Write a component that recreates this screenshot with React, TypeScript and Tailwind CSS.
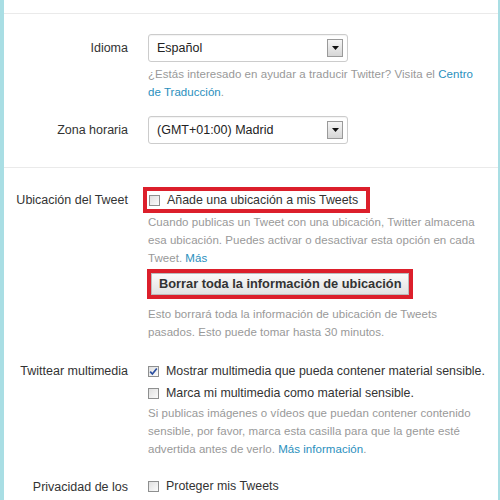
import { ReactNode } from "react";

const font = "font-['Liberation_Sans',Arial,sans-serif]";

const Row = ({ label, children, className }: { label: ReactNode; children: ReactNode; className?: string }) => (
  <div className={`grid grid-cols-[124px_1fr] gap-x-[20px] ${className ?? ""}`}>
    <div className="text-right text-[12.5px] leading-[18px] text-[#333]">{label}</div>
    <div>{children}</div>
  </div>
);

const FakeSelect = ({ value }: { value: string }) => (
  <div className="flex h-[28px] w-[200px] items-center justify-between rounded-[3px] border border-[#ccc] bg-white pl-[8px] pr-[4px] shadow-[inset_0_1px_1px_rgba(0,0,0,0.05)]">
    <span className="text-[12.5px] text-[#222]">{value}</span>
    <span className="flex h-[18px] w-[16px] items-center justify-center border border-[#9a9a9a] bg-gradient-to-b from-[#f6f6f6] to-[#d6d6d6]">
      <svg width="7" height="4" viewBox="0 0 7 4">
        <path d="M0 0h7L3.5 4z" fill="#111" />
      </svg>
    </span>
  </div>
);

const Box = ({ checked }: { checked?: boolean }) => (
  <span className="mr-[7px] flex h-[11px] w-[11px] shrink-0 items-center justify-center border border-[#8e8f8f] bg-gradient-to-br from-[#e0e0e0] to-[#fbfbfb]">
    {checked && (
      <svg width="9" height="9" viewBox="0 0 9 9">
        <path d="M1.2 4.6 3.4 7 7.8 1.5" fill="none" stroke="#2b4fa0" strokeWidth="1.7" />
      </svg>
    )}
  </span>
);

const Check = ({ checked, children }: { checked?: boolean; children: ReactNode }) => (
  <div className="flex h-[18px] items-center whitespace-nowrap text-[12.4px] text-[#333]">
    <Box checked={checked} />
    <span>{children}</span>
  </div>
);

// lines are broken by hand to follow the original wrapping
const Help = ({ lines, className }: { lines: ReactNode[]; className?: string }) => (
  <div className={`text-[11.5px] leading-[18px] tracking-[0.04px] text-[#999] ${className ?? ""}`}>
    {lines.map((l, i) => (
      <div key={i} className="whitespace-nowrap">
        {l}
      </div>
    ))}
  </div>
);

const Link = ({ children }: { children: ReactNode }) => <span className="text-[#2a8fbd]">{children}</span>;

export default function App() {
  return (
    <div className={`h-[500px] w-[500px] overflow-hidden border-l-[4px] border-r-[2px] border-l-[#a9dee4] border-r-[#a9dee4] bg-white ${font}`}>
      <div className="mt-[13px] border-t border-[#eaeaea] pb-[23px] pt-[20px]">
        <Row label={<span className="leading-[28px]">Idioma</span>}>
          <FakeSelect value="Español" />
          <Help
            className="mt-[3px]"
            lines={[
              <>¿Estás interesado en ayudar a traducir Twitter? Visita el <Link>Centro</Link></>,
              <><Link>de Traducción</Link>.</>,
            ]}
          />
        </Row>
        <Row label={<span className="leading-[28px]">Zona horaria</span>} className="mt-[15px]">
          <FakeSelect value="(GMT+01:00) Madrid" />
        </Row>
      </div>
      <div className="border-t border-[#eaeaea] pt-[19px]">
        <Row label={<span className="leading-[26px]">Ubicación del Tweet</span>}>
          <div className="-ml-[5px] inline-flex border-[4px] border-[#dc1f2b] pl-[2px] pr-[8px]">
            <Check>Añade una ubicación a mis Tweets</Check>
          </div>
          <Help
            lines={[
              "Cuando publicas un Tweet con una ubicación, Twitter almacena",
              "esa ubicación. Puedes activar o desactivar esta opción en cada",
              <>Tweet. <Link>Más</Link></>,
            ]}
          />
          <div className="-ml-[1px] mt-[2px] inline-flex border-[4px] border-[#dc1f2b]">
            <button className="h-[22px] border border-[#bbb] bg-gradient-to-b from-[#fafafa] to-[#e2e2e2] px-[7px] text-[12.8px] font-bold text-[#333]">
              Borrar toda la información de ubicación
            </button>
          </div>
          <Help
            className="mt-[6px]"
            lines={["Esto borrará toda la información de ubicación de Tweets", "pasados. Esto puede tomar hasta 30 minutos."]}
          />
        </Row>
        <Row label="Twittear multimedia" className="mt-[21px]">
          <Check checked>Mostrar multimedia que pueda contener material sensible.</Check>
          <div className="mt-[4px]">
            <Check>Marca mi multimedia como material sensible.</Check>
          </div>
          <Help
            className="mt-[2px]"
            lines={[
              "Si publicas imágenes o vídeos que puedan contener contenido",
              "sensible, por favor, marca esta casilla para que la gente esté",
              <>advertida antes de verlo. <Link>Más información</Link>.</>,
            ]}
          />
        </Row>
        <Row label={<span className="block leading-[21px]">Privacidad de los Tweets</span>} className="mt-[19px]">
          <Check>Proteger mis Tweets</Check>
        </Row>
      </div>
    </div>
  );
}
